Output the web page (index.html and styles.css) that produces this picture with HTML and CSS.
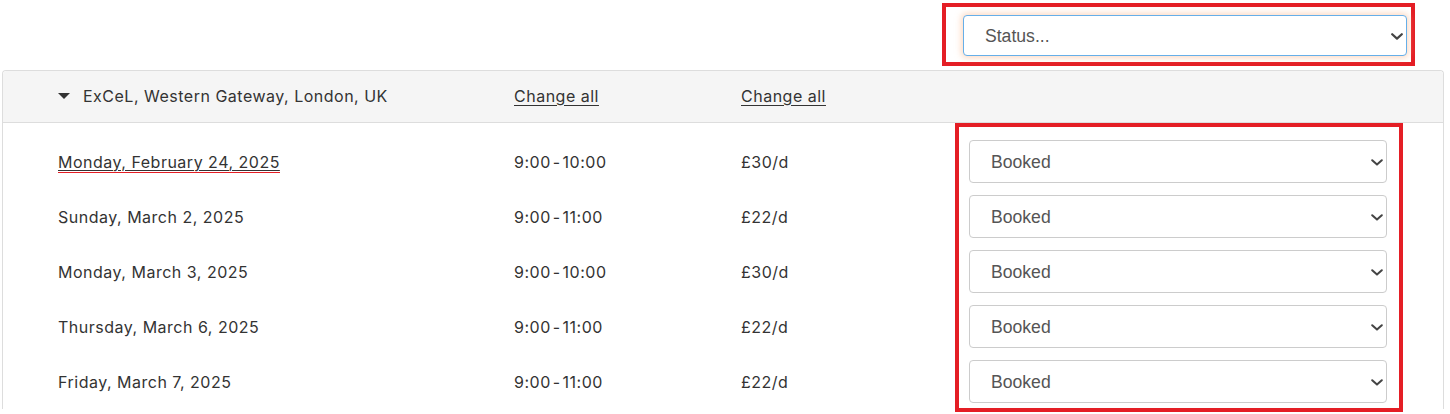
FILE: index.html
```html
<!DOCTYPE html>
<html lang="en">
<head>
<meta charset="utf-8">
<title>Bookings</title>
<link rel="stylesheet" href="styles.css">
</head>
<body>
<div class="topbar">
  <div class="mark mark-top">
    <div class="sel sel-focus">
      <select><option>Status...</option></select>
      <svg class="chev" width="12" height="7" viewBox="0 0 12 7"><path d="M1.2 1.2 L6 5.6 L10.8 1.2" fill="none" stroke="#444" stroke-width="2.2" stroke-linecap="round" stroke-linejoin="round"/></svg>
    </div>
  </div>
</div>
<div class="panel">
  <div class="head">
    <div class="loc"><span class="caret"></span>ExCeL, Western Gateway, London, UK</div>
    <div><a class="link" href="#">Change all</a></div>
    <div><a class="link" href="#">Change all</a></div>
    <div></div>
  </div>
  <div class="body">
    <div class="row">
      <div><a class="link date" href="#">Monday, February 24, 2025</a></div>
      <div class="time">9:00 - 10:00</div>
      <div>£30/d</div>
      <div class="sel"><select><option>Booked</option></select><svg class="chev" width="12" height="7" viewBox="0 0 12 7"><path d="M1.2 1.2 L6 5.6 L10.8 1.2" fill="none" stroke="#444" stroke-width="2" stroke-linecap="round" stroke-linejoin="round"/></svg></div>
    </div>
    <div class="row">
      <div>Sunday, March 2, 2025</div>
      <div class="time">9:00 - 11:00</div>
      <div>£22/d</div>
      <div class="sel"><select><option>Booked</option></select><svg class="chev" width="12" height="7" viewBox="0 0 12 7"><path d="M1.2 1.2 L6 5.6 L10.8 1.2" fill="none" stroke="#444" stroke-width="2" stroke-linecap="round" stroke-linejoin="round"/></svg></div>
    </div>
    <div class="row">
      <div>Monday, March 3, 2025</div>
      <div class="time">9:00 - 10:00</div>
      <div>£30/d</div>
      <div class="sel"><select><option>Booked</option></select><svg class="chev" width="12" height="7" viewBox="0 0 12 7"><path d="M1.2 1.2 L6 5.6 L10.8 1.2" fill="none" stroke="#444" stroke-width="2" stroke-linecap="round" stroke-linejoin="round"/></svg></div>
    </div>
    <div class="row">
      <div>Thursday, March 6, 2025</div>
      <div class="time">9:00 - 11:00</div>
      <div>£22/d</div>
      <div class="sel"><select><option>Booked</option></select><svg class="chev" width="12" height="7" viewBox="0 0 12 7"><path d="M1.2 1.2 L6 5.6 L10.8 1.2" fill="none" stroke="#444" stroke-width="2" stroke-linecap="round" stroke-linejoin="round"/></svg></div>
    </div>
    <div class="row">
      <div>Friday, March 7, 2025</div>
      <div class="time">9:00 - 11:00</div>
      <div>£22/d</div>
      <div class="sel"><select><option>Booked</option></select><svg class="chev" width="12" height="7" viewBox="0 0 12 7"><path d="M1.2 1.2 L6 5.6 L10.8 1.2" fill="none" stroke="#444" stroke-width="2" stroke-linecap="round" stroke-linejoin="round"/></svg></div>
    </div>
    <div class="mark mark-col"></div>
  </div>
</div>
</body>
</html>
```
FILE: styles.css
```css
* { box-sizing: border-box; }
html, body { margin: 0; background: #fff; }
body {
  font-family: Inter, "Noto Sans", "Liberation Sans", sans-serif;
  font-size: 16px;
  letter-spacing: 0.5px;
  color: #333;
  overflow: hidden;
  height: 414px;
}
.topbar {
  display: flex;
  justify-content: flex-end;
  padding: 3px 35px 0 0;
}
.mark {
  border: 4px solid #e41e25;
}
.mark-top {
  width: 473px;
  height: 63px;
  padding: 8px 4px 6px 17px;
}
.sel {
  position: relative;
}
.sel select {
  display: block;
  width: 100%;
  height: 43px;
  appearance: none;
  -webkit-appearance: none;
  background: #fff;
  border: 1px solid #ccc;
  border-radius: 4px;
  padding: 0 30px 0 21px;
  font-family: "Liberation Sans", Arial, sans-serif;
  font-size: 17.6px;
  letter-spacing: normal;
  color: #555;
  outline: none;
}
.sel-focus select {
  height: 41px;
  border-color: #66afe9;
  box-shadow: 0 0 6px 2px rgba(252, 190, 150, 0.55);
}
.chev {
  position: absolute;
  right: 4px;
  top: 50%;
  margin-top: -3px;
  pointer-events: none;
}
.panel {
  margin: 4px 6px 0 2px;
  border: 1px solid #ddd;
  border-radius: 4px 4px 0 0;
  border-bottom: none;
}
.head, .row {
  display: grid;
  grid-template-columns: 456px 227px 228px 418px;
  padding-left: 55px;
  align-items: center;
}
.head {
  height: 52px;
  background: #f5f5f5;
  border-bottom: 1px solid #ddd;
  border-radius: 4px 4px 0 0;
  padding-bottom: 2px;
}
.loc {
  display: flex;
  align-items: center;
}
.caret {
  display: inline-block;
  width: 0;
  height: 0;
  border-left: 6px solid transparent;
  border-right: 6px solid transparent;
  border-top: 6px solid #333;
  margin: 1px 13px 0 0;
}
.link {
  color: #333;
  text-decoration: underline;
  text-underline-offset: 3px;
  text-decoration-thickness: 1px;
}
.date {
  text-underline-offset: 2px;
  padding-bottom: 1px;
  background: linear-gradient(#e41e25, #e41e25) left bottom / 100% 1px no-repeat;
}
.time {
  word-spacing: -3px;
}
.body {
  position: relative;
  padding-top: 11px;
}
.row {
  height: 55px;
}
.mark-col {
  position: absolute;
  left: 952px;
  top: 0;
  width: 448px;
  height: 289px;
}
```
